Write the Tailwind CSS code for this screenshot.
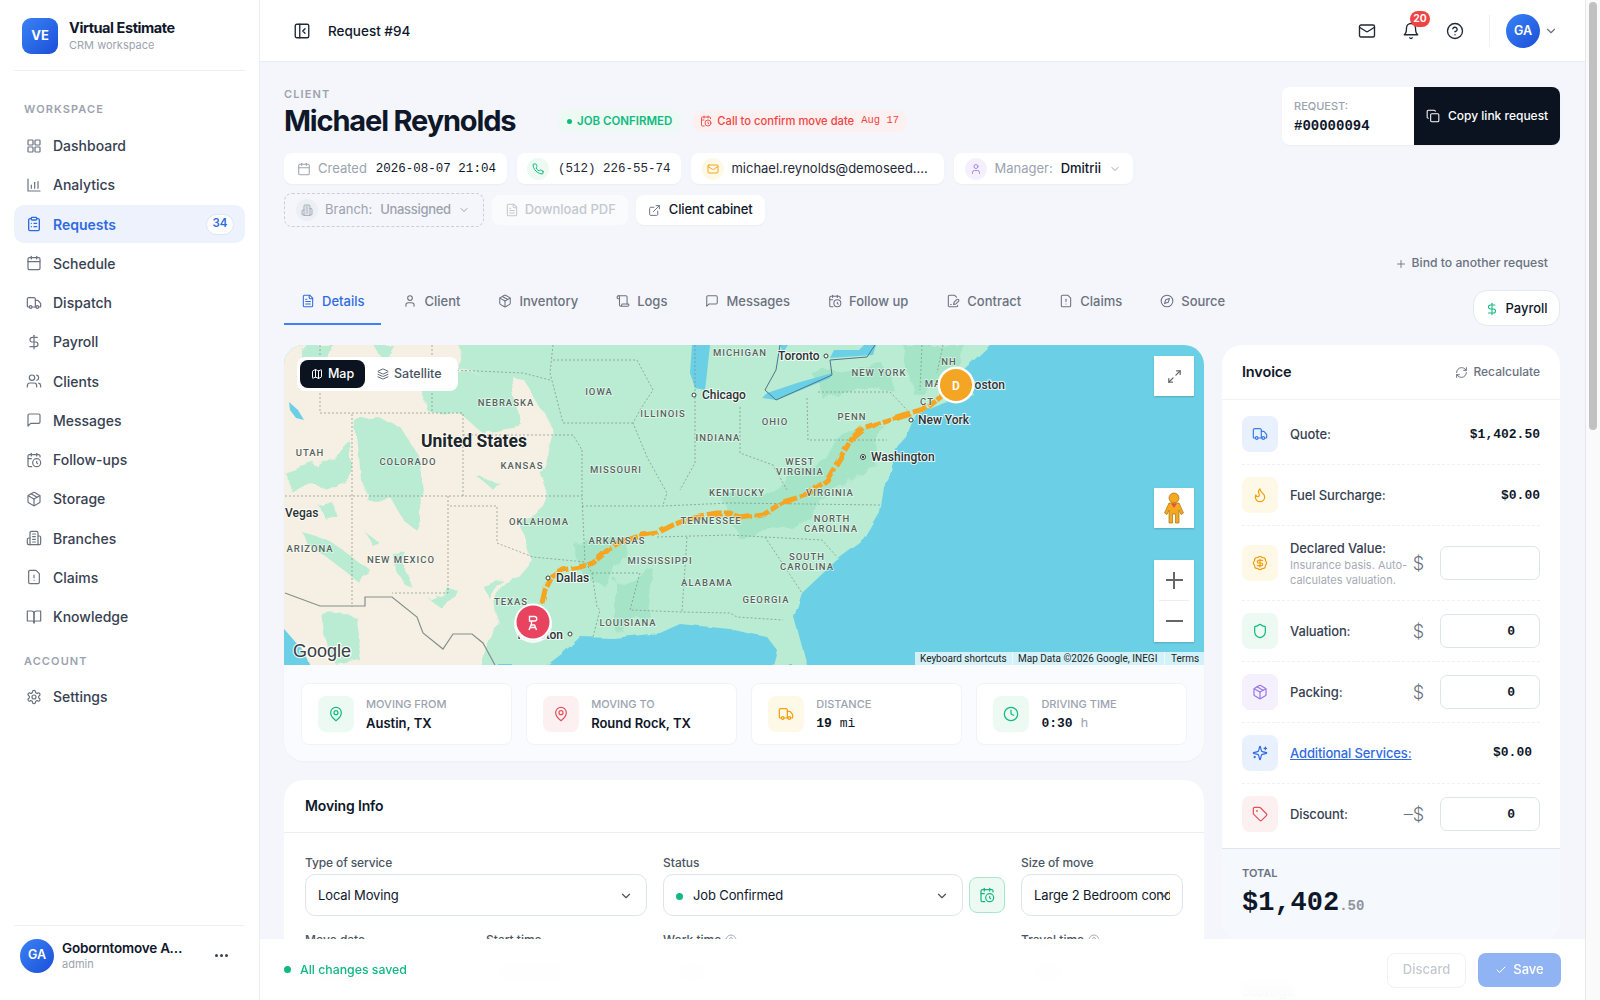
<!DOCTYPE html>
<html lang="en">
<head>
    <meta charset="UTF-8">
    <title>Request #94</title>
    <script src="https://cdn.jsdelivr.net/npm/@tailwindcss/browser@4"></script>
</head>
<body class="h-screen overflow-hidden flex bg-[#f4f6fb] text-[#0f172a] [font-family:Inter,sans-serif]">

    <!-- icon sprite -->
    <svg class="hidden">
        <symbol id="i-grid" viewBox="0 0 24 24" fill="none" stroke="currentColor" stroke-width="1.8" stroke-linecap="round" stroke-linejoin="round"><rect x="3" y="3" width="7.5" height="7.5" rx="1"/><rect x="13.5" y="3" width="7.5" height="7.5" rx="1"/><rect x="3" y="13.5" width="7.5" height="7.5" rx="1"/><rect x="13.5" y="13.5" width="7.5" height="7.5" rx="1"/></symbol>
        <symbol id="i-chart" viewBox="0 0 24 24" fill="none" stroke="currentColor" stroke-width="1.8" stroke-linecap="round" stroke-linejoin="round"><path d="M3 3v18h18"/><path d="M8 17v-5"/><path d="M13 17V8"/><path d="M18 17V7"/></symbol>
        <symbol id="i-clipboard" viewBox="0 0 24 24" fill="none" stroke="currentColor" stroke-width="2" stroke-linecap="round" stroke-linejoin="round"><rect x="8" y="2" width="8" height="4" rx="1"/><path d="M16 4h2a2 2 0 0 1 2 2v14a2 2 0 0 1-2 2H6a2 2 0 0 1-2-2V6a2 2 0 0 1 2-2h2"/><path d="M12 11h4"/><path d="M12 16h4"/><path d="M8 11h.01"/><path d="M8 16h.01"/></symbol>
        <symbol id="i-calendar" viewBox="0 0 24 24" fill="none" stroke="currentColor" stroke-width="1.8" stroke-linecap="round" stroke-linejoin="round"><path d="M8 2v4"/><path d="M16 2v4"/><rect x="3" y="4" width="18" height="18" rx="2"/><path d="M3 10h18"/></symbol>
        <symbol id="i-truck" viewBox="0 0 24 24" fill="none" stroke="currentColor" stroke-width="1.8" stroke-linecap="round" stroke-linejoin="round"><path d="M14 18V6a2 2 0 0 0-2-2H4a2 2 0 0 0-2 2v11a1 1 0 0 0 1 1h2"/><path d="M15 18H9"/><path d="M19 18h2a1 1 0 0 0 1-1v-3.65a1 1 0 0 0-.22-.624l-3.48-4.35A1 1 0 0 0 17.52 8H14"/><circle cx="17" cy="18" r="2"/><circle cx="7" cy="18" r="2"/></symbol>
        <symbol id="i-dollar" viewBox="0 0 24 24" fill="none" stroke="currentColor" stroke-width="1.8" stroke-linecap="round" stroke-linejoin="round"><path d="M12 2v20"/><path d="M17 5H9.5a3.5 3.5 0 0 0 0 7h5a3.5 3.5 0 0 1 0 7H6"/></symbol>
        <symbol id="i-users" viewBox="0 0 24 24" fill="none" stroke="currentColor" stroke-width="1.8" stroke-linecap="round" stroke-linejoin="round"><path d="M16 21v-2a4 4 0 0 0-4-4H6a4 4 0 0 0-4 4v2"/><circle cx="9" cy="7" r="4"/><path d="M22 21v-2a4 4 0 0 0-3-3.87"/><path d="M16 3.13a4 4 0 0 1 0 7.75"/></symbol>
        <symbol id="i-message" viewBox="0 0 24 24" fill="none" stroke="currentColor" stroke-width="1.8" stroke-linecap="round" stroke-linejoin="round"><path d="M21 15a2 2 0 0 1-2 2H7l-4 4V5a2 2 0 0 1 2-2h14a2 2 0 0 1 2 2z"/></symbol>
        <symbol id="i-calclock" viewBox="0 0 24 24" fill="none" stroke="currentColor" stroke-width="1.8" stroke-linecap="round" stroke-linejoin="round"><path d="M21 7.5V6a2 2 0 0 0-2-2H5a2 2 0 0 0-2 2v14a2 2 0 0 0 2 2h3.5"/><path d="M16 2v4"/><path d="M8 2v4"/><path d="M3 10h5"/><path d="M17.5 17.5 16 16.3V14"/><circle cx="16" cy="16" r="6"/></symbol>
        <symbol id="i-package" viewBox="0 0 24 24" fill="none" stroke="currentColor" stroke-width="1.8" stroke-linecap="round" stroke-linejoin="round"><path d="M11 21.73a2 2 0 0 0 2 0l7-4A2 2 0 0 0 21 16V8a2 2 0 0 0-1-1.73l-7-4a2 2 0 0 0-2 0l-7 4A2 2 0 0 0 3 8v8a2 2 0 0 0 1 1.73z"/><path d="M12 22V12"/><path d="m3.3 7 8.7 5 8.7-5"/><path d="m7.5 4.27 9 5.15"/></symbol>
        <symbol id="i-building" viewBox="0 0 24 24" fill="none" stroke="currentColor" stroke-width="1.8" stroke-linecap="round" stroke-linejoin="round"><path d="M6 22V4a2 2 0 0 1 2-2h8a2 2 0 0 1 2 2v18Z"/><path d="M6 12H4a2 2 0 0 0-2 2v6a2 2 0 0 0 2 2h2"/><path d="M18 9h2a2 2 0 0 1 2 2v9a2 2 0 0 1-2 2h-2"/><path d="M10 6h4"/><path d="M10 10h4"/><path d="M10 14h4"/><path d="M10 18h4"/></symbol>
        <symbol id="i-filewarn" viewBox="0 0 24 24" fill="none" stroke="currentColor" stroke-width="1.8" stroke-linecap="round" stroke-linejoin="round"><path d="M15 2H6a2 2 0 0 0-2 2v16a2 2 0 0 0 2 2h12a2 2 0 0 0 2-2V7Z"/><path d="M12 9v4"/><path d="M12 17h.01"/></symbol>
        <symbol id="i-book" viewBox="0 0 24 24" fill="none" stroke="currentColor" stroke-width="1.8" stroke-linecap="round" stroke-linejoin="round"><path d="M2 3h6a4 4 0 0 1 4 4v14a3 3 0 0 0-3-3H2z"/><path d="M22 3h-6a4 4 0 0 0-4 4v14a3 3 0 0 1 3-3h7z"/></symbol>
        <symbol id="i-settings" viewBox="0 0 24 24" fill="none" stroke="currentColor" stroke-width="1.8" stroke-linecap="round" stroke-linejoin="round"><path d="M12.22 2h-.44a2 2 0 0 0-2 2v.18a2 2 0 0 1-1 1.73l-.43.25a2 2 0 0 1-2 0l-.15-.08a2 2 0 0 0-2.73.73l-.22.38a2 2 0 0 0 .73 2.73l.15.1a2 2 0 0 1 1 1.72v.51a2 2 0 0 1-1 1.74l-.15.09a2 2 0 0 0-.73 2.73l.22.38a2 2 0 0 0 2.73.73l.15-.08a2 2 0 0 1 2 0l.43.25a2 2 0 0 1 1 1.73V20a2 2 0 0 0 2 2h.44a2 2 0 0 0 2-2v-.18a2 2 0 0 1 1-1.73l.43-.25a2 2 0 0 1 2 0l.15.08a2 2 0 0 0 2.73-.73l.22-.39a2 2 0 0 0-.73-2.73l-.15-.08a2 2 0 0 1-1-1.74v-.5a2 2 0 0 1 1-1.74l.15-.09a2 2 0 0 0 .73-2.73l-.22-.38a2 2 0 0 0-2.73-.73l-.15.08a2 2 0 0 1-2 0l-.43-.25a2 2 0 0 1-1-1.73V4a2 2 0 0 0-2-2z"/><circle cx="12" cy="12" r="3"/></symbol>
        <symbol id="i-panel" viewBox="0 0 24 24" fill="none" stroke="currentColor" stroke-width="1.8" stroke-linecap="round" stroke-linejoin="round"><rect x="3" y="3" width="18" height="18" rx="2"/><path d="M9 3v18"/><path d="m16 15-3-3 3-3"/></symbol>
        <symbol id="i-mail" viewBox="0 0 24 24" fill="none" stroke="currentColor" stroke-width="1.8" stroke-linecap="round" stroke-linejoin="round"><rect x="2" y="4" width="20" height="16" rx="2"/><path d="m22 7-8.97 5.7a1.94 1.94 0 0 1-2.06 0L2 7"/></symbol>
        <symbol id="i-bell" viewBox="0 0 24 24" fill="none" stroke="currentColor" stroke-width="1.8" stroke-linecap="round" stroke-linejoin="round"><path d="M6 8a6 6 0 0 1 12 0c0 7 3 9 3 9H3s3-2 3-9"/><path d="M10.3 21a1.94 1.94 0 0 0 3.4 0"/></symbol>
        <symbol id="i-help" viewBox="0 0 24 24" fill="none" stroke="currentColor" stroke-width="1.8" stroke-linecap="round" stroke-linejoin="round"><circle cx="12" cy="12" r="10"/><path d="M9.09 9a3 3 0 0 1 5.83 1c0 2-3 3-3 3"/><path d="M12 17h.01"/></symbol>
        <symbol id="i-chevron" viewBox="0 0 24 24" fill="none" stroke="currentColor" stroke-width="2" stroke-linecap="round" stroke-linejoin="round"><path d="m6 9 6 6 6-6"/></symbol>
        <symbol id="i-phone" viewBox="0 0 24 24" fill="none" stroke="currentColor" stroke-width="2" stroke-linecap="round" stroke-linejoin="round"><path d="M22 16.92v3a2 2 0 0 1-2.18 2 19.79 19.79 0 0 1-8.63-3.07 19.5 19.5 0 0 1-6-6 19.79 19.79 0 0 1-3.07-8.67A2 2 0 0 1 4.11 2h3a2 2 0 0 1 2 1.72 12.84 12.84 0 0 0 .7 2.81 2 2 0 0 1-.45 2.11L8.09 9.91a16 16 0 0 0 6 6l1.27-1.27a2 2 0 0 1 2.11-.45 12.84 12.84 0 0 0 2.81.7A2 2 0 0 1 22 16.92z"/></symbol>
        <symbol id="i-user" viewBox="0 0 24 24" fill="none" stroke="currentColor" stroke-width="1.8" stroke-linecap="round" stroke-linejoin="round"><path d="M19 21v-2a4 4 0 0 0-4-4H9a4 4 0 0 0-4 4v2"/><circle cx="12" cy="7" r="4"/></symbol>
        <symbol id="i-file" viewBox="0 0 24 24" fill="none" stroke="currentColor" stroke-width="1.8" stroke-linecap="round" stroke-linejoin="round"><path d="M15 2H6a2 2 0 0 0-2 2v16a2 2 0 0 0 2 2h12a2 2 0 0 0 2-2V7Z"/><path d="M14 2v4a2 2 0 0 0 2 2h4"/><path d="M10 9H8"/><path d="M16 13H8"/><path d="M16 17H8"/></symbol>
        <symbol id="i-external" viewBox="0 0 24 24" fill="none" stroke="currentColor" stroke-width="1.8" stroke-linecap="round" stroke-linejoin="round"><path d="M15 3h6v6"/><path d="M10 14 21 3"/><path d="M18 13v6a2 2 0 0 1-2 2H5a2 2 0 0 1-2-2V8a2 2 0 0 1 2-2h6"/></symbol>
        <symbol id="i-copy" viewBox="0 0 24 24" fill="none" stroke="currentColor" stroke-width="1.8" stroke-linecap="round" stroke-linejoin="round"><rect x="8" y="8" width="14" height="14" rx="2"/><path d="M4 16c-1.1 0-2-.9-2-2V4c0-1.1.9-2 2-2h10c1.1 0 2 .9 2 2"/></symbol>
        <symbol id="i-plus" viewBox="0 0 24 24" fill="none" stroke="currentColor" stroke-width="1.8" stroke-linecap="round" stroke-linejoin="round"><path d="M5 12h14"/><path d="M12 5v14"/></symbol>
        <symbol id="i-scroll" viewBox="0 0 24 24" fill="none" stroke="currentColor" stroke-width="1.8" stroke-linecap="round" stroke-linejoin="round"><path d="M19 17V5a2 2 0 0 0-2-2H4"/><path d="M8 21h12a2 2 0 0 0 2-2v-1a1 1 0 0 0-1-1H11a1 1 0 0 0-1 1v1a2 2 0 1 1-4 0V5a2 2 0 1 0-4 0v2a1 1 0 0 0 1 1h3"/></symbol>
        <symbol id="i-sign" viewBox="0 0 24 24" fill="none" stroke="currentColor" stroke-width="1.8" stroke-linecap="round" stroke-linejoin="round"><path d="M20 19.5v.5a2 2 0 0 1-2 2H6a2 2 0 0 1-2-2V4a2 2 0 0 1 2-2h8.5L18 5.5"/><path d="M8 18h1"/><path d="M18.42 9.61a2.1 2.1 0 1 1 2.97 2.97L16.95 17 13 18l.99-3.95 4.43-4.44Z"/></symbol>
        <symbol id="i-compass" viewBox="0 0 24 24" fill="none" stroke="currentColor" stroke-width="1.8" stroke-linecap="round" stroke-linejoin="round"><circle cx="12" cy="12" r="10"/><path d="m16.24 7.76-2.12 6.36-6.36 2.12 2.12-6.36 6.36-2.12z"/></symbol>
        <symbol id="i-map" viewBox="0 0 24 24" fill="none" stroke="currentColor" stroke-width="2" stroke-linecap="round" stroke-linejoin="round"><path d="M14.106 5.553a2 2 0 0 0 1.788 0l3.659-1.83A1 1 0 0 1 21 4.619v12.764a1 1 0 0 1-.553.894l-4.553 2.277a2 2 0 0 1-1.788 0l-4.212-2.106a2 2 0 0 0-1.788 0l-3.659 1.83A1 1 0 0 1 3 19.381V6.618a1 1 0 0 1 .553-.894l4.553-2.277a2 2 0 0 1 1.788 0z"/><path d="M15 5.764v15"/><path d="M9 3.236v15"/></symbol>
        <symbol id="i-layers" viewBox="0 0 24 24" fill="none" stroke="currentColor" stroke-width="1.8" stroke-linecap="round" stroke-linejoin="round"><path d="M12.83 2.18a2 2 0 0 0-1.66 0L2.6 6.08a1 1 0 0 0 0 1.83l8.58 3.91a2 2 0 0 0 1.66 0l8.58-3.9a1 1 0 0 0 0-1.83Z"/><path d="m22 17.65-9.17 4.16a2 2 0 0 1-1.66 0L2 17.65"/><path d="m22 12.65-9.17 4.16a2 2 0 0 1-1.66 0L2 12.65"/></symbol>
        <symbol id="i-pin" viewBox="0 0 24 24" fill="none" stroke="currentColor" stroke-width="1.8" stroke-linecap="round" stroke-linejoin="round"><path d="M20 10c0 6-8 12-8 12s-8-6-8-12a8 8 0 0 1 16 0Z"/><circle cx="12" cy="10" r="3"/></symbol>
        <symbol id="i-clock" viewBox="0 0 24 24" fill="none" stroke="currentColor" stroke-width="1.8" stroke-linecap="round" stroke-linejoin="round"><circle cx="12" cy="12" r="10"/><path d="M12 6v6l4 2"/></symbol>
        <symbol id="i-refresh" viewBox="0 0 24 24" fill="none" stroke="currentColor" stroke-width="1.8" stroke-linecap="round" stroke-linejoin="round"><path d="M3 12a9 9 0 0 1 9-9 9.75 9.75 0 0 1 6.74 2.74L21 8"/><path d="M21 3v5h-5"/><path d="M21 12a9 9 0 0 1-9 9 9.75 9.75 0 0 1-6.74-2.74L3 16"/><path d="M8 16H3v5"/></symbol>
        <symbol id="i-flame" viewBox="0 0 24 24" fill="none" stroke="currentColor" stroke-width="1.8" stroke-linecap="round" stroke-linejoin="round"><path d="M8.5 14.5A2.5 2.5 0 0 0 11 12c0-1.38-.5-2-1-3-1.072-2.143-.224-4.054 2-6 .5 2.5 2 4.9 4 6.5 2 1.6 3 3.5 3 5.5a7 7 0 1 1-14 0c0-1.153.433-2.294 1-3a2.5 2.5 0 0 0 2.5 2.5z"/></symbol>
        <symbol id="i-badge" viewBox="0 0 24 24" fill="none" stroke="currentColor" stroke-width="1.8" stroke-linecap="round" stroke-linejoin="round"><path d="M3.85 8.62a4 4 0 0 1 4.78-4.77 4 4 0 0 1 6.74 0 4 4 0 0 1 4.78 4.78 4 4 0 0 1 0 6.74 4 4 0 0 1-4.77 4.78 4 4 0 0 1-6.75 0 4 4 0 0 1-4.78-4.77 4 4 0 0 1 0-6.76Z"/><path d="M16 8h-6a2 2 0 1 0 0 4h4a2 2 0 1 1 0 4H8"/><path d="M12 18V6"/></symbol>
        <symbol id="i-shield" viewBox="0 0 24 24" fill="none" stroke="currentColor" stroke-width="1.8" stroke-linecap="round" stroke-linejoin="round"><path d="M20 13c0 5-3.5 7.5-7.66 8.95a1 1 0 0 1-.67-.01C7.5 20.5 4 18 4 13V6a1 1 0 0 1 1-1c2 0 4.5-1.2 6.24-2.72a1.17 1.17 0 0 1 1.52 0C14.51 3.81 17 5 19 5a1 1 0 0 1 1 1z"/></symbol>
        <symbol id="i-sparkles" viewBox="0 0 24 24" fill="none" stroke="currentColor" stroke-width="1.8" stroke-linecap="round" stroke-linejoin="round"><path d="M9.937 15.5A2 2 0 0 0 8.5 14.063l-6.135-1.582a.5.5 0 0 1 0-.962L8.5 9.936A2 2 0 0 0 9.937 8.5l1.582-6.135a.5.5 0 0 1 .963 0L14.063 8.5A2 2 0 0 0 15.5 9.937l6.135 1.581a.5.5 0 0 1 0 .964L15.5 14.063a2 2 0 0 0-1.437 1.437l-1.582 6.135a.5.5 0 0 1-.963 0z"/><path d="M20 3v4"/><path d="M22 5h-4"/><path d="M4 17v2"/><path d="M5 18H3"/></symbol>
        <symbol id="i-tag" viewBox="0 0 24 24" fill="none" stroke="currentColor" stroke-width="1.8" stroke-linecap="round" stroke-linejoin="round"><path d="M12.586 2.586A2 2 0 0 0 11.172 2H4a2 2 0 0 0-2 2v7.172a2 2 0 0 0 .586 1.414l8.704 8.704a2.426 2.426 0 0 0 3.42 0l6.58-6.58a2.426 2.426 0 0 0 0-3.42z"/><circle cx="7.5" cy="7.5" r=".5"/></symbol>
        <symbol id="i-check" viewBox="0 0 24 24" fill="none" stroke="currentColor" stroke-width="2" stroke-linecap="round" stroke-linejoin="round"><path d="M20 6 9 17l-5-5"/></symbol>
        <symbol id="i-expand" viewBox="0 0 24 24" fill="none" stroke="currentColor" stroke-width="1.8" stroke-linecap="round" stroke-linejoin="round"><path d="M15 4h5v5"/><path d="M20 4l-6 6"/><path d="M9 20H4v-5"/><path d="M4 20l6-6"/></symbol>
    </svg>

    <!-- sidebar -->
    <aside class="w-[260px] shrink-0 h-full bg-white border-r border-[#e9ecf3] flex flex-col px-[14px]">
        <div class="h-[71px] shrink-0 border-b border-[#eef0f5] flex items-center gap-[11px] pl-2 pt-[1px]">
            <div class="w-9 h-9 rounded-[9px] bg-gradient-to-br from-[#3b82f6] to-[#1d4ed8] text-white text-[13px] font-bold flex items-center justify-center">VE</div>
            <div>
                <div class="text-[14.5px] font-bold leading-[18px] tracking-[-0.03em]">Virtual Estimate</div>
                <div class="text-[11px] leading-[16px] text-[#9ca3af]">CRM workspace</div>
            </div>
        </div>
        <div class="text-[11px] font-semibold tracking-[0.1em] text-[#9ca3af] pl-[10px] mt-[31px] mb-[10.5px] leading-[14px]">WORKSPACE</div>
        <nav class="flex flex-col gap-[1.25px] text-[14px] font-medium text-[#374151]">
            <a class="h-[38px] flex items-center gap-[11px] px-3"><svg class="w-4 h-4 text-[#6b7280]"><use href="#i-grid"/></svg>Dashboard</a>
            <a class="h-[38px] flex items-center gap-[11px] px-3"><svg class="w-4 h-4 text-[#6b7280]"><use href="#i-chart"/></svg>Analytics</a>
            <a class="h-[38px] flex items-center gap-[11px] px-3 rounded-[10px] bg-[#edf2fd] text-[#2f6be0] font-semibold"><svg class="w-4 h-4"><use href="#i-clipboard"/></svg>Requests<span class="ml-auto w-7 h-[21px] -mr-[1px] rounded-full bg-white border border-[#dbe5fb] text-[11.5px] flex items-center justify-center">34</span></a>
            <a class="h-[38px] flex items-center gap-[11px] px-3"><svg class="w-4 h-4 text-[#6b7280]"><use href="#i-calendar"/></svg>Schedule</a>
            <a class="h-[38px] flex items-center gap-[11px] px-3"><svg class="w-4 h-4 text-[#6b7280]"><use href="#i-truck"/></svg>Dispatch</a>
            <a class="h-[38px] flex items-center gap-[11px] px-3"><svg class="w-4 h-4 text-[#6b7280]"><use href="#i-dollar"/></svg>Payroll</a>
            <a class="h-[38px] flex items-center gap-[11px] px-3"><svg class="w-4 h-4 text-[#6b7280]"><use href="#i-users"/></svg>Clients</a>
            <a class="h-[38px] flex items-center gap-[11px] px-3"><svg class="w-4 h-4 text-[#6b7280]"><use href="#i-message"/></svg>Messages</a>
            <a class="h-[38px] flex items-center gap-[11px] px-3"><svg class="w-4 h-4 text-[#6b7280]"><use href="#i-calclock"/></svg>Follow-ups</a>
            <a class="h-[38px] flex items-center gap-[11px] px-3"><svg class="w-4 h-4 text-[#6b7280]"><use href="#i-package"/></svg>Storage</a>
            <a class="h-[38px] flex items-center gap-[11px] px-3"><svg class="w-4 h-4 text-[#6b7280]"><use href="#i-building"/></svg>Branches</a>
            <a class="h-[38px] flex items-center gap-[11px] px-3"><svg class="w-4 h-4 text-[#6b7280]"><use href="#i-filewarn"/></svg>Claims</a>
            <a class="h-[38px] flex items-center gap-[11px] px-3"><svg class="w-4 h-4 text-[#6b7280]"><use href="#i-book"/></svg>Knowledge</a>
        </nav>
        <div class="text-[11px] font-semibold tracking-[0.1em] text-[#9ca3af] pl-[10px] mt-[18px] mb-[10px] leading-[14px]">ACCOUNT</div>
        <a class="h-[38px] flex items-center gap-[11px] px-3 text-[14px] font-medium text-[#374151]"><svg class="w-4 h-4 text-[#6b7280]"><use href="#i-settings"/></svg>Settings</a>
        <div class="mt-auto h-[75px] border-t border-[#eef0f5] flex items-center pl-[6px] pr-[14px] pb-[15px]">
            <div class="w-[34px] h-[34px] rounded-full bg-gradient-to-br from-[#3b82f6] to-[#1d4ed8] text-white text-[12.5px] font-semibold flex items-center justify-center">GA</div>
            <div class="ml-2 w-[128px]">
                <div class="text-[13.5px] font-semibold leading-[18px] truncate tracking-[-0.015em]">Goborntomove Admin</div>
                <div class="text-[11px] leading-[15px] text-[#9ca3af]">admin</div>
            </div>
            <div class="ml-auto flex gap-[2px] pr-[3px]"><span class="w-[3px] h-[3px] rounded-full bg-[#374151]"></span><span class="w-[3px] h-[3px] rounded-full bg-[#374151]"></span><span class="w-[3px] h-[3px] rounded-full bg-[#374151]"></span></div>
        </div>
    </aside>

    <div class="relative flex-1 min-w-0 h-full flex flex-col overflow-hidden">
        <!-- top bar -->
        <header class="h-[62px] shrink-0 bg-white border-b border-[#e9ecf3] flex items-center pl-[33px] pr-[27px]">
            <svg class="w-[18px] h-[18px] text-[#1f2937]"><use href="#i-panel"/></svg>
            <span class="ml-[17px] pt-[1px] text-[13.5px] font-medium">Request #94</span>
            <div class="ml-auto flex items-center">
                <svg class="w-[18px] h-[18px] text-[#1f2937] -ml-[1px]"><use href="#i-mail"/></svg>
                <div class="relative ml-[26px]">
                    <svg class="w-[18px] h-[18px] text-[#1f2937]"><use href="#i-bell"/></svg>
                    <span class="absolute -top-[11px] left-[8px] w-[20px] h-[16px] rounded-full bg-[#ef4444] text-white text-[10.5px] font-semibold flex items-center justify-center">20</span>
                </div>
                <svg class="ml-[26px] w-[18px] h-[18px] text-[#1f2937]"><use href="#i-help"/></svg>
                <div class="ml-[25px] w-px h-8 bg-[#eef0f5]"></div>
                <div class="ml-4 mt-[1px] w-[34px] h-[34px] rounded-full bg-gradient-to-br from-[#3b82f6] to-[#1d4ed8] text-white text-[12.5px] font-semibold flex items-center justify-center">GA</div>
                <svg class="ml-[4px] w-[14px] h-[14px] text-[#6b7280]"><use href="#i-chevron"/></svg>
            </div>
        </header>

        <main class="flex-1 min-h-0 overflow-hidden pl-6 pr-[25px] pt-[25px]">
            <!-- client head -->
            <div class="flex justify-between items-start">
                <div>
                    <div class="text-[11px] font-semibold tracking-[0.1em] text-[#9ca3af] leading-[14px]">CLIENT</div>
                    <div class="mt-[2px] h-9 flex items-center">
                        <h1 class="text-[29px] font-bold tracking-[-0.04em] leading-9 w-[231px] whitespace-nowrap">Michael Reynolds</h1>
                        <span class="ml-[43px] h-[22px] pt-[1px] px-[9px] rounded-full bg-[#ecfaf3] text-[#10b981] text-[11.5px] font-semibold flex items-center gap-[5px]"><span class="w-[5px] h-[5px] rounded-full bg-[#10b981]"></span>JOB CONFIRMED</span>
                        <span class="ml-[11px] h-[22px] px-2 rounded-full bg-[#fdf0f0] text-[#ef4444] text-[11.2px] font-medium flex items-center gap-[5px]"><svg class="w-3 h-3"><use href="#i-calclock"/></svg>Call to confirm move date<span class="ml-[2px] text-[10.5px] [font-family:'Liberation_Mono',monospace]">Aug 17</span></span>
                    </div>
                    <div class="mt-[14px] flex items-center gap-[10px] h-[31px] text-[13px]">
                        <div class="h-[31px] rounded-[8px] bg-white shadow-[0_1px_2px_rgba(15,23,42,0.04)] pl-[13px] pr-[11px] flex items-center"><svg class="w-[14px] h-[14px] text-[#9ca3af]"><use href="#i-calendar"/></svg><span class="ml-[7px] text-[#9ca3af]">Created</span><span class="ml-[9px] pt-[1px] text-[12.5px] [font-family:'Liberation_Mono',monospace]">2026-08-07 21:04</span></div>
                        <div class="h-[31px] rounded-[8px] bg-white shadow-[0_1px_2px_rgba(15,23,42,0.04)] pl-[10px] pr-[11px] flex items-center"><span class="w-[22px] h-[22px] rounded-full bg-[#ecfaf3] text-[#10b981] flex items-center justify-center"><svg class="w-[12px] h-[12px]"><use href="#i-phone"/></svg></span><span class="ml-[9px] pt-[1px] text-[12.5px] text-[#1f2937] [font-family:'Liberation_Mono',monospace]">(512) 226-55-74</span></div>
                        <div class="h-[31px] rounded-[8px] bg-white shadow-[0_1px_2px_rgba(15,23,42,0.04)] pl-[11px] pr-[13px] flex items-center"><span class="w-[22px] h-[22px] rounded-full bg-[#fef8e7] text-[#f59e0b] flex items-center justify-center"><svg class="w-[12px] h-[12px]"><use href="#i-mail"/></svg></span><span class="ml-[7px] w-[200px] truncate text-[#1f2937]">michael.reynolds@demoseed.vip</span></div>
                        <div class="h-[31px] rounded-[8px] bg-white shadow-[0_1px_2px_rgba(15,23,42,0.04)] pl-[11px] pr-[12px] flex items-center"><span class="w-[22px] h-[22px] rounded-full bg-[#f5f0fe] text-[#a078e8] flex items-center justify-center"><svg class="w-[12px] h-[12px]"><use href="#i-user"/></svg></span><span class="ml-[7px] text-[#9ca3af]">Manager:</span><span class="ml-2 font-medium">Dmitrii</span><svg class="ml-2 w-3 h-3 text-[#9ca3af]"><use href="#i-chevron"/></svg></div>
                    </div>
                    <div class="mt-[9px] flex items-center gap-[8px] h-[34px] text-[13px]">
                        <div class="h-[34px] rounded-[8px] border border-dashed border-[#c9ced8] pl-[11px] pr-[13px] flex items-center"><span class="w-[22px] h-[22px] rounded-full bg-[#eceff5] text-[#9ca3af] flex items-center justify-center"><svg class="w-[12px] h-[12px]"><use href="#i-building"/></svg></span><span class="ml-[7px] text-[#9ca3af]">Branch:</span><span class="ml-2 text-[#9ca3af] font-medium tracking-[-0.025em]">Unassigned</span><svg class="ml-[7px] w-3 h-3 text-[#9ca3af]"><use href="#i-chevron"/></svg></div>
                        <div class="h-[30px] rounded-[8px] bg-white/50 pl-[13px] pr-3 flex items-center text-[#c4c8d0] font-medium"><svg class="w-[14px] h-[14px]"><use href="#i-file"/></svg><span class="ml-[6px]">Download PDF</span></div>
                        <div class="h-[30px] rounded-[8px] bg-white shadow-[0_1px_2px_rgba(15,23,42,0.04)] pl-[12px] pr-3 flex items-center font-medium"><svg class="w-[13px] h-[13px] text-[#6b7280]"><use href="#i-external"/></svg><span class="ml-2 tracking-[-0.01em]">Client cabinet</span></div>
                    </div>
                </div>
                <div class="flex h-[58px] rounded-[8px] overflow-hidden shadow-[0_1px_2px_rgba(15,23,42,0.04)]">
                    <div class="w-[132px] bg-white pl-3 pt-[12px]">
                        <div class="text-[11px] font-medium text-[#9ca3af] leading-[14px]">REQUEST:</div>
                        <div class="mt-1 text-[14px] font-bold leading-[18px] [font-family:'Liberation_Mono',monospace]">#00000094</div>
                    </div>
                    <div class="w-[146px] bg-[#0b1220] text-white text-[12px] font-medium flex items-center pl-3 gap-[8px]"><svg class="w-[14px] h-[14px]"><use href="#i-copy"/></svg>Copy link request</div>
                </div>
            </div>

            <div class="mt-[23px] h-[26px] pt-[1px] flex items-center justify-end pr-3 gap-[5px] text-[12.2px] text-[#6b7280] font-medium"><svg class="w-3 h-3"><use href="#i-plus"/></svg>Bind to another request</div>

            <!-- tabs -->
            <div class="mt-1 flex justify-between items-start">
                <div class="flex gap-[6px] text-[13px] font-medium text-[#6b7280]">
                    <a class="h-[44.5px] border-b-2 border-[#3b82f6] text-[#2f6be0] px-[17px] flex items-center gap-[7px]"><svg class="w-[14px] h-[14px]"><use href="#i-file"/></svg>Details</a>
                    <a class="h-[44.5px] border-b-2 border-transparent px-4 flex items-center gap-[7px]"><svg class="w-[14px] h-[14px]"><use href="#i-user"/></svg>Client</a>
                    <a class="h-[44.5px] border-b-2 border-transparent px-4 flex items-center gap-[7px]"><svg class="w-[14px] h-[14px]"><use href="#i-package"/></svg>Inventory</a>
                    <a class="h-[44.5px] border-b-2 border-transparent px-4 flex items-center gap-[7px]"><svg class="w-[14px] h-[14px]"><use href="#i-scroll"/></svg>Logs</a>
                    <a class="h-[44.5px] border-b-2 border-transparent px-4 flex items-center gap-[7px]"><svg class="w-[14px] h-[14px]"><use href="#i-message"/></svg>Messages</a>
                    <a class="h-[44.5px] border-b-2 border-transparent px-4 flex items-center gap-[7px]"><svg class="w-[14px] h-[14px]"><use href="#i-calclock"/></svg>Follow up</a>
                    <a class="h-[44.5px] border-b-2 border-transparent px-4 flex items-center gap-[7px]"><svg class="w-[14px] h-[14px]"><use href="#i-sign"/></svg>Contract</a>
                    <a class="h-[44.5px] border-b-2 border-transparent px-4 flex items-center gap-[7px]"><svg class="w-[14px] h-[14px]"><use href="#i-filewarn"/></svg>Claims</a>
                    <a class="h-[44.5px] border-b-2 border-transparent px-4 flex items-center gap-[7px]"><svg class="w-[14px] h-[14px]"><use href="#i-compass"/></svg>Source</a>
                </div>
                <div class="mt-[10px] h-9 w-[87px] pt-[1px] rounded-[14px] bg-white border border-[#e5e8ef] flex items-center justify-center gap-[6px] text-[13px] font-medium"><svg class="w-[14px] h-[14px] text-[#10b981]"><use href="#i-dollar"/></svg>Payroll</div>
            </div>

            <div class="mt-[19px] flex gap-[18px] items-start">
                <div class="w-[920px] shrink-0">
                    <!-- map card -->
                    <section class="rounded-[20px] bg-[#fafbfe] shadow-[0_1px_2px_rgba(15,23,42,0.03)] overflow-hidden">
                        <div class="relative h-[320px] [font-family:Roboto,sans-serif]">
                            <svg viewBox="0 0 920 320" class="absolute inset-0 w-[920px] h-[320px]">
                                <defs>
                                    <filter id="rough" x="-5%" y="-5%" width="110%" height="110%"><feTurbulence type="fractalNoise" baseFrequency="0.03" numOctaves="3" seed="7" result="n"/><feDisplacementMap in="SourceGraphic" in2="n" scale="22"/></filter>
                                    <filter id="wobble" x="-5%" y="-5%" width="110%" height="110%"><feTurbulence type="fractalNoise" baseFrequency="0.06" numOctaves="2" seed="3" result="n"/><feDisplacementMap in="SourceGraphic" in2="n" scale="4"/></filter>
                                </defs>
                                <rect width="920" height="320" fill="#6bd0e6"/>
                                <path d="M0 0H706L690 15 679 25 690 50 660 58 632 70 627 80 622 92 610 105 608 128 600 142 596 168 580 195 553 215 518 248 510 272 523 320H489L493 305 483 292 463 288 446 284 396 279 376 288 329 293 296 292 279 308 263 320H33L16 302 0 262Z" fill="#b9ecd3" filter="url(#wobble)"/>
                                <rect x="0" y="0" width="620" height="40" fill="#b9ecd3"/>
                                <!-- darker woodland -->
                                <g fill="#a6e4c7" filter="url(#rough)">
                                    <path d="M290 200 340 190 345 215 320 240 300 235Z"/>
                                    <path d="M440 150 480 150 540 110 570 85 600 80 590 110 550 150 510 180 450 190Z"/>
                                    <path d="M620 0 680 0 665 35 630 50Z"/>
                                    <path d="M330 235 370 225 365 270 330 285Z"/>
                                    <path d="M530 30 600 20 610 45 540 55Z"/>
                                </g>
                                <!-- dry west -->
                                <g filter="url(#rough)">
                                    <path d="M-20 -20H172L175 25 240 35 262 70 268 120 255 150 240 185 248 215 222 245 208 290 195 340H33L16 302 -20 262Z" fill="#f5f0e3"/>
                                    <g transform="translate(-4 -5) scale(.3333)" fill="#b9ecd3">
                                        <path d="M230 250 300 240 370 270 420 350 440 470 400 560 370 540 330 470 250 470 240 350Z"/>
                                        <path d="M20 400 110 370 180 330 210 300 215 400 120 440 30 450Z"/>
                                        <path d="M60 570 130 590 200 640 280 700 240 730 160 670 90 620Z"/>
                                        <path d="M100 15 160 15 140 100 60 140 40 100Z"/>
                                        <path d="M280 15 340 15 310 60Z"/>
                                        <path d="M350 650 390 650 385 730 360 720Z"/>
                                        <path d="M130 830 220 820 240 960 170 975 140 900Z"/>
                                        <path d="M420 130 520 100 700 100 720 250 600 270 540 220 440 210Z"/>
                                        <path d="M590 410 650 420 630 440Z"/>
                                        <path d="M250 570 290 600 270 610Z"/>
                                        <path d="M620 750 680 730 640 790Z"/>
                                        <path d="M440 770 500 740 540 760 480 800Z"/>
                                        <path d="M120 500 160 490 170 530 130 530Z"/>
                                    </g>
                                </g>
                                <g fill="#6bd0e6">
                                    <path d="M408 0H426L423 28 421 45 411 43 406 28Z"/>
                                    <path d="M478 53 493 55 546 33 548 28 513 38 483 48Z"/>
                                    <path d="M546 13 589 10 592 0H580L575 5 550 5Z"/>
                                    <path d="M496 0H504L499 8Z"/>
                                    <path d="M5 57 14 65 20 75 12 73 6 65Z"/>
                                </g>
                                <!-- state lines -->
                                <g fill="none" stroke="#75877d" stroke-opacity=".8" stroke-width=".8" stroke-dasharray="2 2">
                                    <path d="M68 69V262"/>
                                    <path d="M36 0V68H179V151"/>
                                    <path d="M1 151H298"/>
                                    <path d="M148 0V68"/>
                                    <path d="M164 151V248H108"/>
                                    <path d="M166 161H213V198L249 212 301 217 308 228 313 262 316 265 309 292"/>
                                    <path d="M298 105V152L301 217"/>
                                    <path d="M179 90H289L298 105"/>
                                    <path d="M269 0 266 28 279 78H349"/>
                                    <path d="M169 25 239 28 266 35"/>
                                    <path d="M269 15H353L369 45 356 65 349 78 363 112 383 148 379 160"/>
                                    <path d="M298 161H379L446 158 596 160"/>
                                    <path d="M411 0V118L396 145"/>
                                    <path d="M373 192 446 190 481 192 518 248"/>
                                    <path d="M308 228H356"/>
                                    <path d="M356 228 346 265 398 267 446 268 453 272 499 275"/>
                                    <path d="M403 192 398 267"/>
                                    <path d="M523 53 524 95H603"/>
                                    <path d="M534 47H606L623 65"/>
                                    <path d="M481 192 538 195 553 212"/>
                                    <path d="M456 62V108L489 120 503 145"/>
                                    <path d="M638 0 636 45"/>
                                    <path d="M659 0 653 28"/>
                                </g>
                                <g fill="none" stroke="#83908c" stroke-width="1.2">
                                    <path d="M1 248 36 261H81V252H108L133 272 139 288 159 304 169 289H188L199 298 211 320"/>
                                </g>
                                <path d="M496 0 492 25 481 45 492 55 548 30 546 15 583 12 591 0" fill="none" stroke="#4f7585" stroke-width="1"/>
                                <!-- route -->
                                <path d="M258 258 261 245 268 232 279 225 296 222 309 218 324 205 336 197 359 190 373 188 389 180 409 172 433 168 446 168 456 173 479 170 499 157 523 150 543 135 559 108 569 92 579 83 603 75 619 70 643 63 659 50" fill="none" stroke="#f5a524" stroke-width="5" stroke-dasharray="15 2 9 1.5 19 3" stroke-linejoin="round" filter="url(#wobble)"/>
                                <!-- labels -->
                                <g font-size="9.5" font-weight="500" letter-spacing="1" fill="#56635c" text-anchor="middle" stroke="#ffffff" stroke-opacity=".6" stroke-width="1.5" paint-order="stroke">
                                    <text x="222" y="61">NEBRASKA</text>
                                    <text x="315" y="50">IOWA</text>
                                    <text x="379" y="72">ILLINOIS</text>
                                    <text x="434" y="96">INDIANA</text>
                                    <text x="26" y="111">UTAH</text>
                                    <text x="124" y="120">COLORADO</text>
                                    <text x="238" y="124">KANSAS</text>
                                    <text x="332" y="128">MISSOURI</text>
                                    <text x="453" y="151">KENTUCKY</text>
                                    <text x="255" y="180">OKLAHOMA</text>
                                    <text x="427" y="179">TENNESSEE</text>
                                    <text x="333" y="199">ARKANSAS</text>
                                    <text x="26" y="207">ARIZONA</text>
                                    <text x="117" y="218">NEW MEXICO</text>
                                    <text x="376" y="219">MISSISSIPPI</text>
                                    <text x="423" y="241">ALABAMA</text>
                                    <text x="227" y="260">TEXAS</text>
                                    <text x="344" y="281">LOUISIANA</text>
                                    <text x="456" y="11">MICHIGAN</text>
                                    <text x="595" y="31">NEW YORK</text>
                                    <text x="665" y="20">NH</text>
                                    <text x="491" y="80">OHIO</text>
                                    <text x="568" y="75">PENN</text>
                                    <text x="516" y="120">WEST</text>
                                    <text x="516" y="130">VIRGINIA</text>
                                    <text x="546" y="151">VIRGINIA</text>
                                    <text x="548" y="177">NORTH</text>
                                    <text x="547" y="187">CAROLINA</text>
                                    <text x="523" y="215">SOUTH</text>
                                    <text x="523" y="225">CAROLINA</text>
                                    <text x="482" y="258">GEORGIA</text>
                                    <text x="649" y="42">MA</text>
                                    <text x="643" y="60">CT</text>
                                </g>
                                <g font-size="12" font-weight="500" fill="#2c3433" stroke="#ffffff" stroke-opacity=".8" stroke-width="2" paint-order="stroke">
                                    <text x="1" y="172">Vegas</text>
                                    <text x="418" y="54">Chicago</text>
                                    <text x="272" y="237">Dallas</text>
                                    <text x="279" y="294" text-anchor="end">Houston</text>
                                    <text x="494" y="15">Toronto</text>
                                    <text x="683" y="44">Boston</text>
                                    <text x="634" y="79">New York</text>
                                    <text x="587" y="116">Washington</text>
                                </g>
                                <text x="190" y="102" text-anchor="middle" font-size="17.5" font-weight="700" fill="#20262a" stroke="#ffffff" stroke-opacity=".7" stroke-width="2" paint-order="stroke">United States</text>
                                <g fill="#ffffff" stroke="#3a4340" stroke-width="1">
                                    <circle cx="410" cy="50" r="2"/><circle cx="264" cy="233" r="2"/><circle cx="286" cy="289" r="2"/><circle cx="542" cy="11" r="2"/><circle cx="627" cy="75" r="2"/><circle cx="579" cy="112" r="2.5"/>
                                </g>
                                <circle cx="579" cy="112" r="1.2" fill="#3a4340"/>
                                <text x="9" y="312" font-size="18" font-weight="400" fill="#3c4043" stroke="#ffffff" stroke-opacity=".85" stroke-width="2.5" paint-order="stroke" style="font-family:'Liberation Sans',sans-serif">Google</text>
                                <!-- markers -->
                                <path d="M232 283a18 18 0 0 0 34 0" fill="none" stroke="#3b82f6" stroke-width="1.5"/>
                                <circle cx="249" cy="279" r="19" fill="#ffffff" opacity=".85"/>
                                <circle cx="249" cy="277" r="18.5" fill="#ffffff"/>
                                <circle cx="249" cy="277" r="16.5" fill="#e8435f"/>
                                <path d="M245.5 271.5h5a2 2 0 0 1 0 4.5h-5zM247.5 276v4M245 285l2-5h3.5l2 5M246 282.5h5.5" fill="none" stroke="#ffffff" stroke-width="1.4"/>
                                <circle cx="672" cy="40" r="18.5" fill="#ffffff"/>
                                <circle cx="672" cy="40" r="16" fill="#f5a524"/>
                                <text x="672" y="44.5" text-anchor="middle" font-size="12" font-weight="600" fill="#ffffff">D</text>
                            </svg>

                            <!-- map controls -->
                            <div class="absolute left-[13px] top-[12px] h-[34px] w-[161px] rounded-[8px] bg-white flex items-center pl-[3px] text-[12.5px] font-medium [font-family:Inter,sans-serif]">
                                <span class="h-7 w-[65px] rounded-[8px] bg-[#0b1220] text-white flex items-center justify-center gap-[5px]"><svg class="w-3 h-3"><use href="#i-map"/></svg>Map</span>
                                <span class="ml-[12px] text-[#4b5563] flex items-center gap-[5px]"><svg class="w-3 h-3"><use href="#i-layers"/></svg>Satellite</span>
                            </div>
                            <div class="absolute left-[870px] top-[11px] w-10 h-10 bg-white shadow-[0_1px_2px_rgba(0,0,0,0.2)] flex items-center justify-center text-[#666666]"><svg class="w-[17px] h-[17px]"><use href="#i-expand"/></svg></div>
                            <div class="absolute left-[870px] top-[143px] w-10 h-10 bg-white shadow-[0_1px_2px_rgba(0,0,0,0.2)] flex items-center justify-center">
                                <svg viewBox="0 0 24 32" class="w-[24px] h-[32px]"><circle cx="12" cy="6" r="5" fill="#f7a823" stroke="#a8740f" stroke-width=".7"/><path d="M7 11h10l4.500 10-2.500 1.500L17 18v13h-3.500v-9h-3v9H7V18l-2 4.500L2.500 21Z" fill="#f7a823" stroke="#a8740f" stroke-width=".7"/><path d="M9 11.500h6L12 16Z" fill="#e0553a"/></svg>
                            </div>
                            <div class="absolute left-[870px] top-[215px] w-10 h-[82px] bg-white shadow-[0_1px_2px_rgba(0,0,0,0.2)] flex flex-col items-center text-[#666666]">
                                <div class="h-10 w-full flex items-center justify-center"><span class="relative block w-[17px] h-[17px]"><span class="absolute left-0 top-[7.500px] w-[17px] h-[2px] bg-[#666666]"></span><span class="absolute left-[7.500px] top-0 w-[2px] h-[17px] bg-[#666666]"></span></span></div>
                                <div class="w-[30px] h-px bg-[#eeeeee]"></div>
                                <div class="h-10 w-full flex items-center justify-center"><span class="block w-[17px] h-[2px] bg-[#666666]"></span></div>
                            </div>
                            <div class="absolute left-[631px] bottom-0 h-[13px] w-[289px] bg-white/70 flex text-[10px] leading-[13px] text-[#222222] [font-family:Roboto,sans-serif]">
                                <span class="w-[98px] pl-[5px] border-r border-white/60 whitespace-nowrap">Keyboard shortcuts</span>
                                <span class="w-[152px] pl-[5px] border-r border-white/60 whitespace-nowrap">Map Data ©2026 Google, INEGI</span>
                                <span class="pl-[6px]">Terms</span>
                            </div>
                        </div>
                        <!-- route facts -->
                        <div class="grid grid-cols-4 gap-[14.500px] px-[17px] pt-[18px] pb-4">
                            <div class="h-[62px] rounded-[8px] bg-white border border-[#f1f3f8] flex items-center pl-4 gap-3">
                                <span class="w-9 h-9 rounded-[8px] bg-[#ecfaf3] text-[#10b981] flex items-center justify-center"><svg class="w-4 h-4"><use href="#i-pin"/></svg></span>
                                <div><div class="text-[11px] font-medium text-[#9ca3af] leading-[16px]">MOVING FROM</div><div class="mt-[2px] text-[13px] font-semibold leading-[18px]">Austin, TX</div></div>
                            </div>
                            <div class="h-[62px] rounded-[8px] bg-white border border-[#f1f3f8] flex items-center pl-4 gap-3">
                                <span class="w-9 h-9 rounded-[8px] bg-[#fdf0f0] text-[#e0515c] flex items-center justify-center"><svg class="w-4 h-4"><use href="#i-pin"/></svg></span>
                                <div><div class="text-[11px] font-medium text-[#9ca3af] leading-[16px]">MOVING TO</div><div class="mt-[2px] text-[13px] font-semibold leading-[18px]">Round Rock, TX</div></div>
                            </div>
                            <div class="h-[62px] rounded-[8px] bg-white border border-[#f1f3f8] flex items-center pl-4 gap-3">
                                <span class="w-9 h-9 rounded-[8px] bg-[#fef8e7] text-[#f59e0b] flex items-center justify-center"><svg class="w-4 h-4"><use href="#i-truck"/></svg></span>
                                <div><div class="text-[11px] font-medium text-[#9ca3af] leading-[16px]">DISTANCE</div><div class="mt-[3px] text-[13px] font-bold leading-[18px] [font-family:'Liberation_Mono',monospace]">19 <span class="font-normal">mi</span></div></div>
                            </div>
                            <div class="h-[62px] rounded-[8px] bg-white border border-[#f1f3f8] flex items-center pl-4 gap-3">
                                <span class="w-9 h-9 rounded-[8px] bg-[#ecfaf3] text-[#10b981] flex items-center justify-center"><svg class="w-4 h-4"><use href="#i-clock"/></svg></span>
                                <div><div class="text-[11px] font-medium text-[#9ca3af] leading-[16px]">DRIVING TIME</div><div class="mt-[3px] text-[13px] font-bold leading-[18px] [font-family:'Liberation_Mono',monospace]">0:30 <span class="font-normal text-[#9ca3af]">h</span></div></div>
                            </div>
                        </div>
                    </section>

                    <!-- moving info -->
                    <section class="mt-[19px] rounded-[20px] bg-white">
                        <div class="h-[53px] pb-[2px] border-b border-[#eceff4] flex items-center px-[21px] text-[14px] font-semibold tracking-[-0.01em]">Moving Info</div>
                        <div class="grid grid-cols-[342px_342px_162px] gap-x-4 gap-y-4 px-[21px] pt-[22px]">
                            <div>
                                <div class="text-[12px] font-medium text-[#4b5563] leading-4 tracking-[-0.01em]">Type of service</div>
                                <div class="mt-[3px] h-[42px] pt-[2px] rounded-[10px] border border-[#dfe3ea] flex items-center justify-between pl-3 pr-[13px] text-[13px] tracking-[-0.01em]">Local Moving<svg class="w-[14px] h-[14px] text-[#4b5563]"><use href="#i-chevron"/></svg></div>
                            </div>
                            <div>
                                <div class="text-[12px] font-medium text-[#4b5563] leading-4">Status</div>
                                <div class="mt-[3px] flex items-center gap-[6px]">
                                    <div class="flex-1 h-[42px] pt-[2px] rounded-[10px] border border-[#dfe3ea] flex items-center pl-3 pr-[13px] text-[13px] tracking-[-0.01em]"><span class="w-[7px] h-[7px] rounded-full bg-[#10b981]"></span><span class="ml-[10px]">Job Confirmed</span><svg class="ml-auto w-[14px] h-[14px] text-[#4b5563]"><use href="#i-chevron"/></svg></div>
                                    <div class="w-9 h-9 rounded-[8px] bg-[#ecfaf3] border border-[#a7e8cd] text-[#10b981] flex items-center justify-center"><svg class="w-4 h-4"><use href="#i-calclock"/></svg></div>
                                </div>
                            </div>
                            <div>
                                <div class="text-[12px] font-medium text-[#4b5563] leading-4 tracking-[-0.01em]">Size of move</div>
                                <div class="relative mt-[3px] h-[42px] pt-[2px] rounded-[10px] border border-[#dfe3ea] flex items-center pl-3 pr-3 text-[13px] tracking-[-0.01em] overflow-hidden"><span class="whitespace-nowrap overflow-hidden">Large 2 Bedroom condo</span><svg class="absolute right-[11px] top-[13px] w-[14px] h-[14px] text-[#4b5563]"><use href="#i-chevron"/></svg></div>
                            </div>
                            <div class="grid grid-cols-2 gap-x-5">
                                <div>
                                    <div class="text-[12px] font-medium text-[#4b5563] leading-4">Move date</div>
                                    <div class="mt-1 h-[42px] rounded-[10px] border border-[#dfe3ea] flex items-center pl-3 text-[13px]">08/17/2026</div>
                                </div>
                                <div>
                                    <div class="text-[12px] font-medium text-[#4b5563] leading-4">Start time</div>
                                    <div class="mt-1 h-[42px] rounded-[10px] border border-[#dfe3ea] flex items-center pl-3 text-[13px]">09:00 AM</div>
                                </div>
                            </div>
                            <div>
                                <div class="text-[12px] font-medium text-[#4b5563] leading-4 flex items-center gap-1">Work time<svg class="w-3 h-3 text-[#9ca3af]"><use href="#i-help"/></svg></div>
                                <div class="mt-1 h-[42px] rounded-[10px] border border-[#dfe3ea] flex items-center pl-3 text-[13px]">2:30</div>
                            </div>
                            <div>
                                <div class="text-[12px] font-medium text-[#4b5563] leading-4 flex items-center gap-1">Travel time<svg class="w-3 h-3 text-[#9ca3af]"><use href="#i-help"/></svg></div>
                                <div class="mt-1 h-[42px] rounded-[10px] border border-[#dfe3ea] flex items-center pl-3 text-[13px]">0:30</div>
                            </div>
                        </div>
                    </section>
                </div>

                <div class="w-[338px] shrink-0">
                    <!-- invoice -->
                    <section class="rounded-[20px] bg-white overflow-hidden">
                        <div class="h-[55px] border-b border-[#f0f2f6] flex items-center justify-between px-5">
                            <span class="text-[14.5px] font-semibold tracking-[-0.01em]">Invoice</span>
                            <span class="flex items-center gap-[5px] text-[12px] font-medium text-[#6b7280]"><svg class="w-[13px] h-[13px]"><use href="#i-refresh"/></svg>Recalculate</span>
                        </div>
                        <div class="px-5 pt-[4px] pb-4">
                            <div class="flex items-center py-3 border-b border-dashed border-[#edf0f4]">
                                <span class="w-9 h-9 rounded-[8px] bg-[#eaf1fe] text-[#3b7de8] flex items-center justify-center"><svg class="w-4 h-4"><use href="#i-truck"/></svg></span>
                                <span class="ml-3 pt-[2px] text-[13px] tracking-[-0.01em] font-medium text-[#374151]">Quote:</span>
                                <span class="ml-auto pt-[1px] text-[13px] font-bold [font-family:'Liberation_Mono',monospace]">$1,402.50</span>
                            </div>
                            <div class="flex items-center py-3 border-b border-dashed border-[#edf0f4]">
                                <span class="w-9 h-9 rounded-[8px] bg-[#fef8e7] text-[#f59e0b] flex items-center justify-center"><svg class="w-4 h-4"><use href="#i-flame"/></svg></span>
                                <span class="ml-3 pt-[2px] text-[13px] tracking-[-0.01em] font-medium text-[#374151]">Fuel Surcharge:</span>
                                <span class="ml-auto pt-[1px] text-[13px] font-bold [font-family:'Liberation_Mono',monospace]">$0.00</span>
                            </div>
                            <div class="flex items-center py-3 border-b border-dashed border-[#edf0f4]">
                                <span class="w-9 h-9 rounded-[8px] bg-[#fef8e7] text-[#f59e0b] flex items-center justify-center"><svg class="w-4 h-4"><use href="#i-badge"/></svg></span>
                                <div class="ml-3">
                                    <div class="text-[13px] tracking-[-0.01em] font-medium text-[#374151] leading-[20px]">Declared Value:</div>
                                    <div class="text-[11px] text-[#a5abb6] leading-[15px] whitespace-nowrap">Insurance basis. Auto-<br>calculates valuation.</div>
                                </div>
                                <span class="ml-auto text-[18px] text-[#6b7280] font-light">$</span>
                                <div class="ml-4 w-[100px] h-[34px] rounded-[7px] border border-[#dfe3ea]"></div>
                            </div>
                            <div class="flex items-center py-3 border-b border-dashed border-[#edf0f4]">
                                <span class="w-9 h-9 rounded-[8px] bg-[#ecfaf3] text-[#10b981] flex items-center justify-center"><svg class="w-4 h-4"><use href="#i-shield"/></svg></span>
                                <span class="ml-3 pt-[2px] text-[13px] tracking-[-0.01em] font-medium text-[#374151]">Valuation:</span>
                                <span class="ml-auto text-[18px] text-[#6b7280] font-light">$</span>
                                <div class="ml-4 w-[100px] h-[34px] pt-[1px] rounded-[7px] border border-[#dfe3ea] flex items-center justify-end pr-6 text-[13px] font-bold [font-family:'Liberation_Mono',monospace]">0</div>
                            </div>
                            <div class="flex items-center py-3 border-b border-dashed border-[#edf0f4]">
                                <span class="w-9 h-9 rounded-[8px] bg-[#f4f0fe] text-[#9b74e8] flex items-center justify-center"><svg class="w-4 h-4"><use href="#i-package"/></svg></span>
                                <span class="ml-3 pt-[2px] text-[13px] tracking-[-0.01em] font-medium text-[#374151]">Packing:</span>
                                <span class="ml-auto text-[18px] text-[#6b7280] font-light">$</span>
                                <div class="ml-4 w-[100px] h-[34px] pt-[1px] rounded-[7px] border border-[#dfe3ea] flex items-center justify-end pr-6 text-[13px] font-bold [font-family:'Liberation_Mono',monospace]">0</div>
                            </div>
                            <div class="flex items-center py-3 border-b border-dashed border-[#edf0f4]">
                                <span class="w-9 h-9 rounded-[8px] bg-[#eaf1fe] text-[#2f6be0] flex items-center justify-center"><svg class="w-4 h-4"><use href="#i-sparkles"/></svg></span>
                                <span class="ml-3 pt-[2px] text-[13px] tracking-[-0.01em] font-medium text-[#2f6be0] underline">Additional Services:</span>
                                <span class="ml-auto mr-2 text-[13px] font-bold [font-family:'Liberation_Mono',monospace]">$0.00</span>
                            </div>
                            <div class="flex items-center pt-3">
                                <span class="w-9 h-9 rounded-[8px] bg-[#fdf0f0] text-[#e0515c] flex items-center justify-center"><svg class="w-4 h-4"><use href="#i-tag"/></svg></span>
                                <span class="ml-3 pt-[2px] text-[13px] tracking-[-0.01em] font-medium text-[#374151]">Discount:</span>
                                <span class="ml-auto text-[18px] text-[#6b7280] font-light">–$</span>
                                <div class="ml-4 w-[100px] h-[34px] pt-[1px] rounded-[7px] border border-[#dfe3ea] flex items-center justify-end pr-6 text-[13px] font-bold [font-family:'Liberation_Mono',monospace]">0</div>
                            </div>
                        </div>
                        <div class="h-[92px] bg-[#f5f8fd] border-t border-[#dfe5f0] px-5 pt-[17px]">
                            <div class="text-[11px] font-semibold text-[#6b7280] leading-[14px]">TOTAL</div>
                            <div class="mt-[5px] text-[27px] font-bold leading-[36px] [font-family:'Liberation_Mono',monospace]">$1,402<span class="text-[14px] text-[#8f96a3]">.50</span></div>
                        </div>
                    </section>
                    <section class="mt-[18px] rounded-[20px] bg-white h-[80px] px-5 pt-[22px] text-[14px] font-semibold">Storage</section>
                </div>
            </div>
        </main>

        <!-- save bar, floats over the page -->
        <div class="absolute left-0 right-0 bottom-0 h-[61px] bg-white/95 backdrop-blur-sm flex items-center pl-6 pr-[24px] pt-[1px]">
            <span class="w-[7px] h-[7px] rounded-full bg-[#10b981] -mt-[1px]"></span>
            <span class="ml-[9px] text-[12.3px] font-medium text-[#10b981]">All changes saved</span>
            <span class="ml-auto w-[79px] h-[35px] rounded-[8px] border border-[#eff1f5] flex items-center justify-center text-[13px] font-medium text-[#c4c8d0]">Discard</span>
            <span class="ml-3 w-[83px] h-[34px] rounded-[8px] bg-[#8fb3f3] text-white flex items-center justify-center gap-[6px] text-[13px] font-medium"><svg class="w-3 h-3"><use href="#i-check"/></svg>Save</span>
        </div>
    </div>

    <!-- page scrollbar -->
    <div class="w-[15px] shrink-0 h-full bg-[#fafafa] border-l border-[#e8e8e8] pl-[3px] pt-[2px]">
        <div class="w-2 h-[428px] rounded-full bg-[#c1c1c1]"></div>
    </div>
</body>
</html>
